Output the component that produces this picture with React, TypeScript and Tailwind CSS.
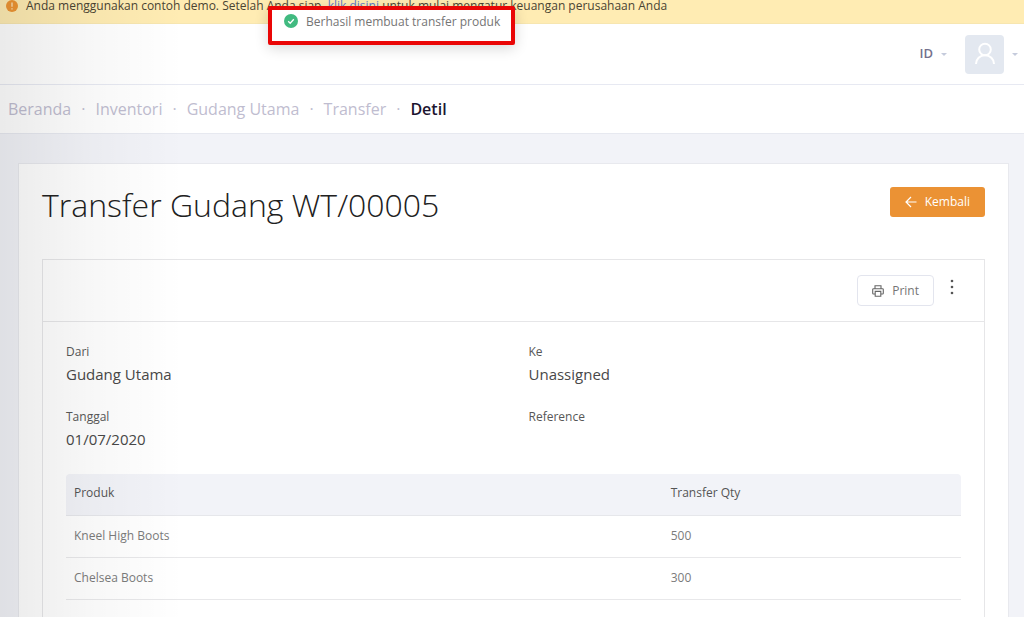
import React, { Fragment } from 'react';

const CRUMBS = ['Beranda', 'Inventori', 'Gudang Utama', 'Transfer'];

const DETAILS = [
  { label: 'Dari', value: 'Gudang Utama' },
  { label: 'Ke', value: 'Unassigned' },
  { label: 'Tanggal', value: '01/07/2020' },
  { label: 'Reference', value: '' },
];

const ITEMS = [
  { name: 'Kneel High Boots', qty: 500 },
  { name: 'Chelsea Boots', qty: 300 },
];

const Caret = () => (
  <svg viewBox="0 0 6 3" className="w-[6px] h-[3px] fill-[#c5cbdc]" aria-hidden="true">
    <path d="M0 0h6L3 3z" />
  </svg>
);

const DemoBanner = () => (
  <div className="flex items-start gap-2 pl-[6px] h-6 border-b border-[#f7e6b0] bg-[#ffecb3] text-xs leading-3 text-[#4a4433] whitespace-nowrap">
    <svg viewBox="0 0 12 12" className="w-3 h-3 shrink-0" aria-hidden="true">
      <circle cx="6" cy="6" r="6" fill="#ee9533" />
      <path d="M6 2.6v4.2M6 8.2v1.2" stroke="#fff3d6" strokeWidth="1.1" />
    </svg>
    <p>
      Anda menggunakan contoh demo. Setelah Anda siap,{' '}
      <a href="#mulai" className="text-[#5d78c9]">klik disini</a>{' '}
      untuk mulai mengatur keuangan perusahaan Anda
    </p>
  </div>
);

const Toast = () => (
  <div
    role="status"
    className="absolute top-[6px] left-[268px] z-20 flex items-start gap-2 pl-3 pr-[11px] pt-1 h-[39px] border-4 border-[#ea0606] rounded-[2px] bg-white shadow-[0_3px_14px_rgba(0,0,0,0.16)] text-xs leading-4 text-[#757575] whitespace-nowrap"
  >
    <svg viewBox="0 0 14 14" className="w-[14px] h-[14px] shrink-0" aria-hidden="true">
      <circle cx="7" cy="7" r="7" fill="#41ba80" />
      <path d="M4.2 7.2l2 2 3.6-4" fill="none" stroke="#fff" strokeWidth="1.3" />
    </svg>
    Berhasil membuat transfer produk
  </div>
);

const TopBar = () => (
  <header className="flex items-center justify-end h-[61px] pr-[6px] border-b border-[#e7e9f2] bg-white">
    <button type="button" className="flex items-center gap-2 text-[13px] font-semibold text-[#75718d]">
      ID <Caret />
    </button>
    <button type="button" aria-label="Akun" className="flex items-center gap-2 ml-[18px]">
      <span className="flex items-center justify-center w-[39px] h-[39px] rounded bg-[#e3e8f0]">
        <svg viewBox="0 0 22 24" className="w-[22px] h-6" fill="none" stroke="#fff" strokeWidth="2" aria-hidden="true">
          <circle cx="11" cy="7.5" r="5.8" />
          <path d="M2 22c0-5 4-8.7 9-8.7s9 3.700 9 8.700" />
        </svg>
      </span>
      <Caret />
    </button>
  </header>
);

const Breadcrumb = () => (
  <nav className="flex items-center gap-[10px] h-[49px] px-2 border-b border-[#e7e9f0] bg-white text-base text-[#bfbdd0]">
    {CRUMBS.map((crumb) => (
      <Fragment key={crumb}>
        <a href="#">{crumb}</a>
        <span>·</span>
      </Fragment>
    ))}
    <span className="font-semibold text-[#1c1530]">Detil</span>
  </nav>
);

export default function App() {
  return (
    <div className="relative flex flex-col min-h-screen bg-[#f2f3f8] font-['Open_Sans',sans-serif]">
      <DemoBanner />
      <Toast />
      <TopBar />
      <Breadcrumb />

      <main className="flex flex-col flex-1 pt-[29px] pl-[18px] pr-[15px]">
        <section className="flex flex-col flex-1 px-[23px] pt-[23px] border border-b-0 border-[#e8e9ee] bg-white">
          <div className="flex items-start justify-between mb-9">
            <h1 className="text-[32px] leading-9 font-light text-[#212121]">Transfer Gudang WT/00005</h1>
            <button
              type="button"
              className="flex items-center gap-2 h-[30px] px-[15px] rounded-[3px] bg-[#eb9234] text-xs text-white"
            >
              <svg viewBox="0 0 12 12" className="w-3 h-3" fill="none" stroke="#fff" strokeWidth="1.2" aria-hidden="true">
                <path d="M11.500 6H1M6 1L1 6l5 5" />
              </svg>
              Kembali
            </button>
          </div>

          <div className="flex flex-col flex-1 border border-b-0 border-[#e6e6e8]">
            <div className="flex items-center justify-end gap-3 h-[62px] pr-[26px] border-b border-[#e6e6e8]">
              <button
                type="button"
                className="flex items-center gap-2 h-[31px] px-[14px] rounded border border-[#e3e5ee] text-xs text-[#757575]"
              >
                <svg viewBox="0 0 12 12" className="w-3 h-3" fill="none" stroke="#666" strokeWidth="1.1" aria-hidden="true">
                  <path d="M3 3.500V.8h6v2.700M3 9H1.500Q.7 9 .7 8.200V4.600Q.7 3.700 1.500 3.700h9q.8 0 .8.900v3.600q0 .8-.8.8H9" />
                  <path d="M3.200 6.400h5.600v4.800H3.200z" />
                </svg>
                Print
              </button>
              <button type="button" aria-label="Menu" className="flex justify-center w-3 pb-2">
                <svg viewBox="0 0 4 16" className="w-1 h-4" fill="#555" aria-hidden="true">
                  <circle cx="2" cy="2" r="1.300" />
                  <circle cx="2" cy="8" r="1.300" />
                  <circle cx="2" cy="14" r="1.300" />
                </svg>
              </button>
            </div>

            <div className="px-[23px] pt-5">
              <dl className="grid grid-cols-2 gap-x-[30px]">
                {DETAILS.map((d) => (
                  <div key={d.label} className="h-[65px]">
                    <dt className="text-xs leading-5 text-[#575757]">{d.label}</dt>
                    <dd className="text-[15px] leading-6 text-[#484848]">{d.value}</dd>
                  </div>
                ))}
              </dl>

              <table className="w-full mt-[2px] text-xs text-left table-fixed">
                <thead>
                  <tr className="h-[41px] border-b border-[#e6e7eb] bg-[#f2f3f8] text-[#555]">
                    <th className="w-2/3 pb-[2px] px-2 font-normal rounded-tl">Produk</th>
                    <th className="pb-[2px] px-2 font-normal rounded-tr">Transfer Qty</th>
                  </tr>
                </thead>
                <tbody className="text-[#7b7b7b]">
                  {ITEMS.map((item) => (
                    <tr key={item.name} className="h-[42px] border-b border-[#e8e8ea]">
                      <td className="px-2">{item.name}</td>
                      <td className="px-2">{item.qty}</td>
                    </tr>
                  ))}
                </tbody>
              </table>
            </div>
          </div>
        </section>
      </main>

      {/* Shadow cast by the side menu */}
      <div className="absolute inset-y-0 left-0 z-10 w-[184px] bg-linear-to-r from-black/8 via-black/3 to-transparent pointer-events-none" />
    </div>
  );
}
